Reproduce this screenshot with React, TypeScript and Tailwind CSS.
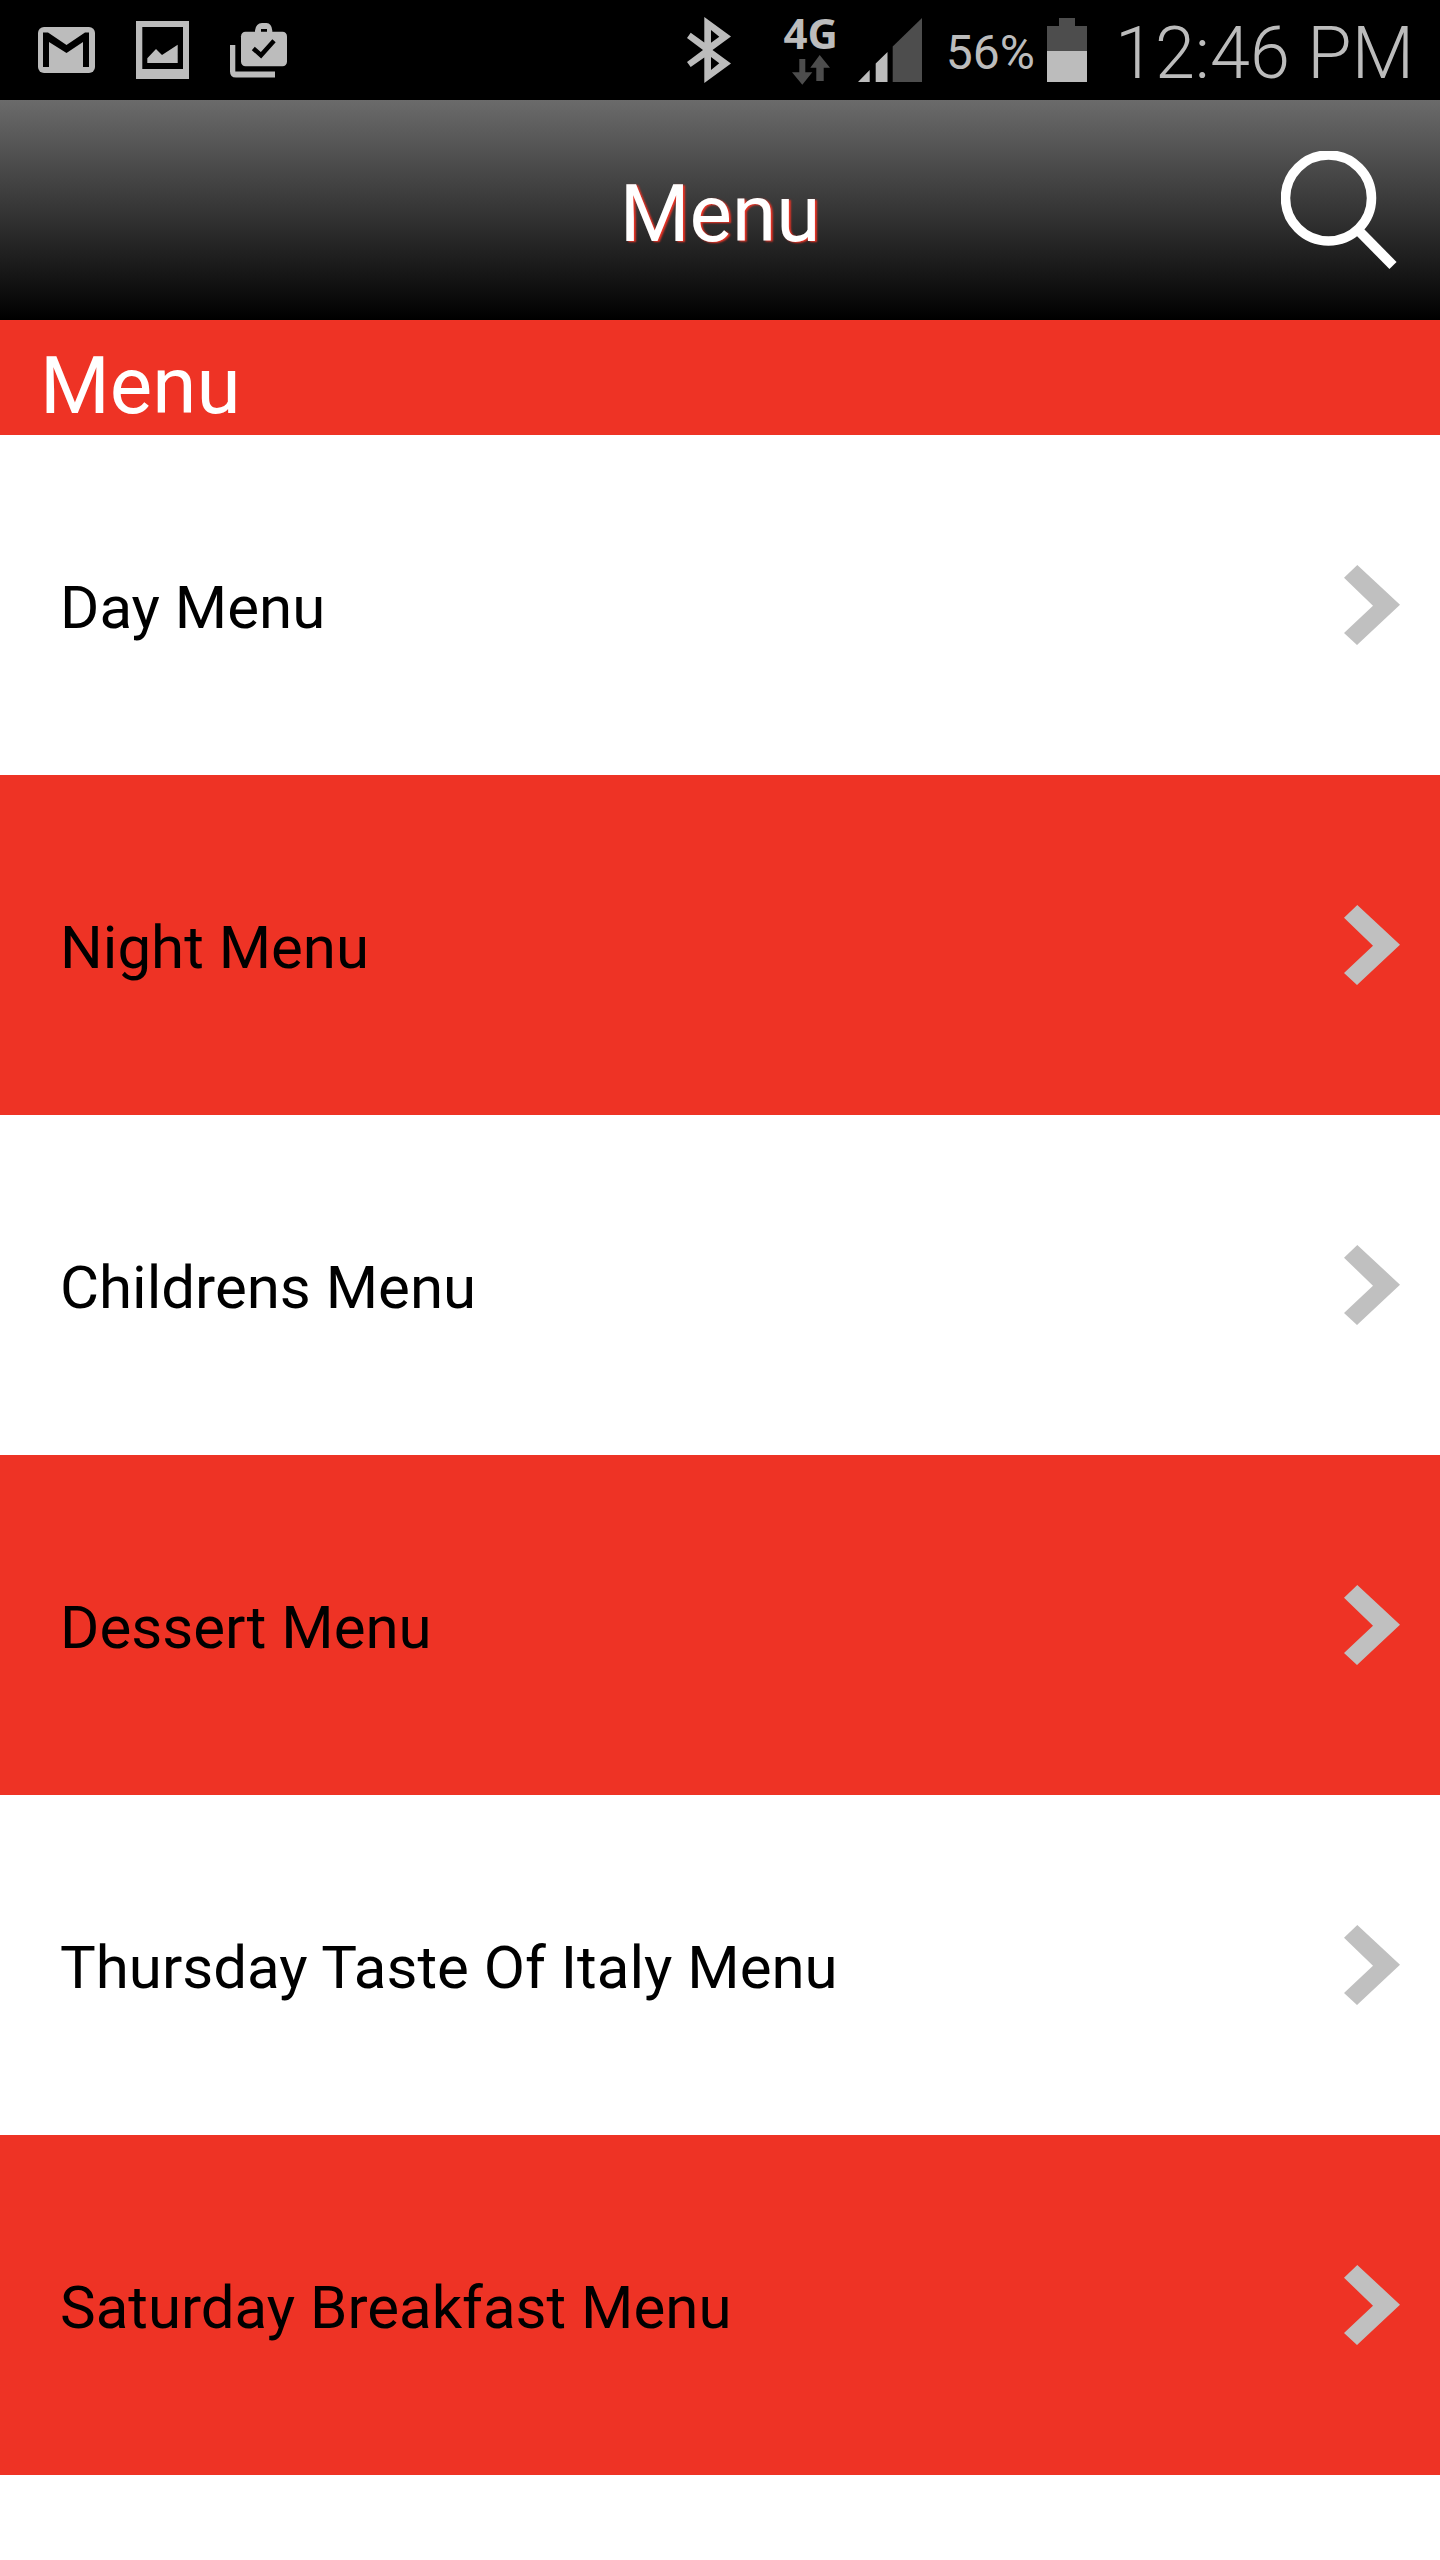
interface MenuItem {
  id: number;
  name: string;
}

const items: MenuItem[] = [
  { id: 1, name: 'Day Menu' },
  { id: 2, name: 'Night Menu' },
  { id: 3, name: 'Childrens Menu' },
  { id: 4, name: 'Dessert Menu' },
  { id: 5, name: 'Thursday Taste Of Italy Menu' },
  { id: 6, name: 'Saturday Breakfast Menu' },
];

function MailIcon() {
  return (
    <svg width="57" height="46" viewBox="0 0 57 46" aria-hidden="true">
      <rect width="57" height="46" rx="6" fill="#bcbcbc" />
      <path d="M5 5.5H10L28.5 18 47 5.5H51V40H45V15L28.5 26 11 15V40H5z" fill="#000" />
    </svg>
  );
}

function PhotoIcon() {
  return (
    <svg width="53" height="58" viewBox="0 0 53 58" fill="#bcbcbc" aria-hidden="true">
      <path d="M0 0H53V58H0zM6.3 6V48H47V6z" fillRule="evenodd" />
      <path d="M11.3 42V37.3L20 28l6 6 15.7-10.3V42z" />
    </svg>
  );
}

function ShopIcon() {
  return (
    <svg width="57" height="55" viewBox="0 0 57 55" fill="#bcbcbc" aria-hidden="true">
      <path d="M25 10V7.5Q26 0 32 0h4.500Q41.500 0 42.300 7.500V10H37V6H31v4z" />
      <rect x="11" y="8.7" width="46" height="34.500" rx="4.500" />
      <path d="M0 22h5.300v26.500H45v6H6q-6 0-6-6z" />
      <path d="M23.300 25.500l7.700 6.800L44 17.800" fill="none" stroke="#000" strokeWidth="4.500" />
    </svg>
  );
}

function BluetoothIcon() {
  return (
    <svg width="44" height="66" viewBox="0 0 44 66" fill="#bcbcbc" aria-hidden="true">
      <path
        fillRule="evenodd"
        d="M17.300 0L44 19.500 25.500 33 44 46.500 17.300 66V40.500L3.700 50 0 45l16-12L0 21l3.700-5.300 13.600 9.800zM24 13v12.700l8.300-6zM24 40v13l8.300-6.700z"
      />
    </svg>
  );
}

function DataArrows() {
  return (
    <svg width="38" height="30" viewBox="0 0 38 30" fill="#4d4d4d" aria-hidden="true">
      <path d="M7.300 4h6v13.300h7L10.300 29.700 0 17.300h7.300z" />
      <path d="M27.700 0L38 12.700h-6.300V26h-7.400V12.700h-6z" />
    </svg>
  );
}

function SignalIcon() {
  return (
    <svg width="64" height="64" viewBox="0 0 64 64" fill="#bcbcbc" aria-hidden="true">
      <path d="M0 64L11.700 52V64zM17.700 45.500L29.500 34V64H17.700z" />
      <path d="M34.700 28.500L64 0V64H34.700z" fill="#4d4d4d" />
    </svg>
  );
}

function BatteryIcon() {
  return (
    <svg width="40" height="64" viewBox="0 0 40 64" aria-hidden="true">
      <path d="M12 0H28V8H40V33H0V8H12z" fill="#4d4d4d" />
      <rect y="33" width="40" height="31" fill="#bcbcbc" />
    </svg>
  );
}

function SearchIcon() {
  return (
    <svg width="116" height="119" viewBox="0 0 116 119" fill="none" stroke="#fff" aria-hidden="true">
      <circle cx="47.500" cy="47" r="43" strokeWidth="9.500" />
      <path d="M78 80L112 114.500" strokeWidth="10" />
    </svg>
  );
}

function ChevronIcon() {
  return (
    <svg width="56" height="80" viewBox="0 0 56 80" fill="#c0c0c0" className="shrink-0" aria-hidden="true">
      <path d="M0 12.700L13.300 0 56 39.700 13 80 0 68 29 40.700z" />
    </svg>
  );
}

function StatusBar() {
  return (
    <div className="flex h-[100px] items-center justify-between bg-black pl-[38px] pr-[26px] text-[#bcbcbc]">
      <div className="flex items-center gap-[41px]">
        <MailIcon />
        <PhotoIcon />
        <ShopIcon />
      </div>
      <div className="flex items-center">
        <BluetoothIcon />
        <div className="ml-[52px] flex flex-col items-center gap-1">
          <span className="font-['Open_Sans',sans-serif] text-[42px] leading-9 font-bold">4G</span>
          <DataArrows />
        </div>
        <div className="ml-5 flex items-center">
          <SignalIcon />
          <span className="ml-6 pt-1.5 text-5xl">56%</span>
        </div>
        <div className="ml-3 flex items-center gap-7">
          <BatteryIcon />
          <span className="pt-2 text-7xl font-[350]">12:46 PM</span>
        </div>
      </div>
    </div>
  );
}

export default function App() {
  return (
    <div className="min-h-screen bg-white font-[Roboto,sans-serif]">
      <StatusBar />

      <header className="grid h-[220px] grid-cols-[1fr_auto_1fr] items-center bg-linear-to-b/srgb from-[#6b6b6b] to-black px-[43px]">
        <h1 className="col-start-2 pt-2 text-[80px] leading-none text-white [text-shadow:2px_1px_2px_#ee3325]">Menu</h1>
        <button type="button" aria-label="Search" className="cursor-pointer justify-self-end">
          <SearchIcon />
        </button>
      </header>

      <main>
        <h2 className="flex h-[115px] items-center bg-[#ee3325] px-10 pt-4 text-[80px] leading-none text-white">Menu</h2>
        <ul>
          {items.map((item) => (
            <li key={item.id} className="odd:bg-white even:bg-[#ee3325]">
              <a href={`#menu-${item.id}`} className="flex h-[340px] items-center justify-between pl-[60px] pr-10 text-6xl text-black">
                <span className="pt-1.5">{item.name}</span>
                <ChevronIcon />
              </a>
            </li>
          ))}
        </ul>
      </main>
    </div>
  );
}
